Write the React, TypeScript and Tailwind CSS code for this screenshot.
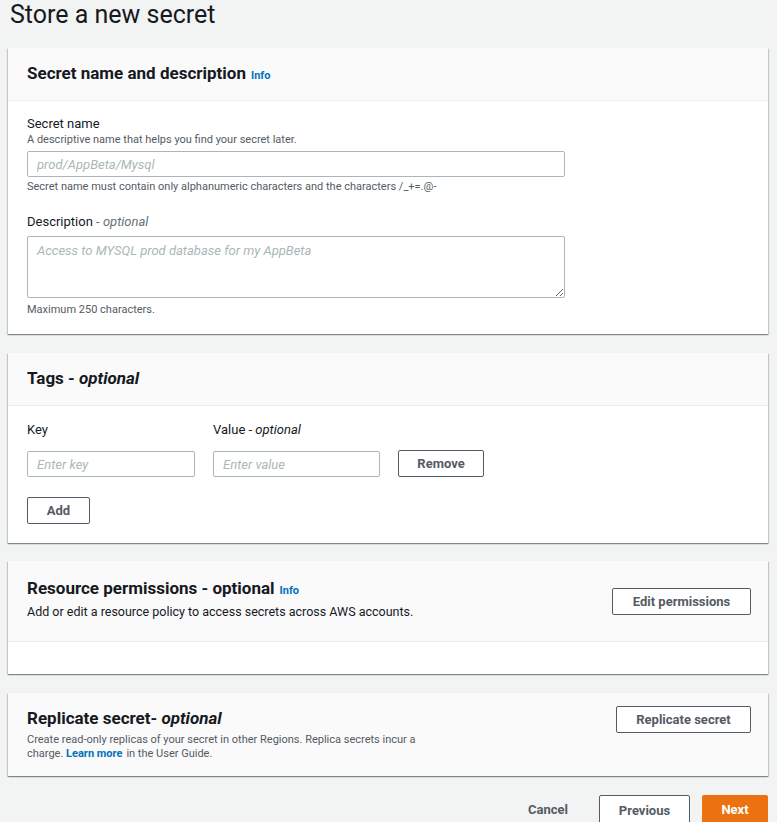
import React from 'react'

const FONT = { fontFamily: 'Roboto, "Noto Sans", Arial, sans-serif' }

const shadowCls =
  'shadow-[0_1px_1px_0_rgba(0,28,36,0.3),1px_1px_1px_0_rgba(0,28,36,0.15),-1px_1px_1px_0_rgba(0,28,36,0.15)]'

const btnCls =
  'h-[27px] rounded-[2px] border border-[#545b64] bg-white px-[16px] text-[13px] font-bold text-[#545b64] leading-none'

function Info() {
  return <span className="ml-[5px] text-[11px] font-bold text-[#0073bb]">Info</span>
}

export default function App() {
  return (
    <div className="min-h-screen bg-[#f2f3f3] pl-[8px] pr-[9px] text-[#16191f]" style={FONT}>
      <h1 className="mb-[18px] h-[30px] pl-[2px] text-[25px] leading-[30px] font-normal">Store a new secret</h1>

      {/* Secret name and description */}
      <section className={`${shadowCls} bg-white`}>
        <div className="flex h-[53px] items-center border-b border-[#eaeded] bg-[#fafafa] px-[19px]">
          <h2 className="text-[17px] font-bold">
            Secret name and description
            <Info />
          </h2>
        </div>
        <div className="px-[19px] pt-[15px] pb-[16px]">
          <div className="text-[13px] leading-[16px]">Secret name</div>
          <div className="text-[11px] leading-[15px] text-[#545b64]">A descriptive name that helps you find your secret later.</div>
          <input
            className="mt-[4px] block h-[26px] w-[538px] rounded-[2px] border border-[#aab7b8] px-[9px] text-[13px] placeholder:italic placeholder:text-[#aab7b8] outline-none"
            placeholder="prod/AppBeta/Mysql"
          />
          <div className="mt-[2px] text-[11px] leading-[16px] text-[#545b64]">
            Secret name must contain only alphanumeric characters and the characters /_+=.@-
          </div>

          <div className="mt-[19px] text-[13px] leading-[16px]">
            Description <span className="text-[#687078]">-</span>{' '}
            <span className="italic text-[#687078]">optional</span>
          </div>
          <textarea
            className="mt-[6px] block h-[62px] w-[538px] rounded-[2px] border border-[#aab7b8] px-[9px] py-[4px] text-[13px] placeholder:italic placeholder:text-[#aab7b8] outline-none"
            placeholder="Access to MYSQL prod database for my AppBeta"
          />
          <div className="mt-[4px] text-[11px] leading-[16px] text-[#545b64]">Maximum 250 characters.</div>
        </div>
      </section>

      {/* Tags */}
      <section className={`${shadowCls} mt-[19px] bg-white`}>
        <div className="flex h-[53px] items-center border-b border-[#eaeded] bg-[#fafafa] px-[19px]">
          <h2 className="text-[17px] font-bold">
            Tags - <span className="italic">optional</span>
          </h2>
        </div>
        <div className="px-[19px] pt-[16px] pb-[19px]">
          <div className="flex gap-[18px]">
            <div className="w-[168px]">
              <div className="text-[13px] leading-[16px]">Key</div>
              <input
                className="mt-[13px] block h-[26px] w-[168px] rounded-[2px] border border-[#aab7b8] px-[9px] text-[13px] placeholder:italic placeholder:text-[#aab7b8] outline-none"
                placeholder="Enter key"
              />
            </div>
            <div className="w-[167px]">
              <div className="text-[13px] leading-[16px]">
                Value - <span className="italic">optional</span>
              </div>
              <input
                className="mt-[13px] block h-[26px] w-[167px] rounded-[2px] border border-[#aab7b8] px-[9px] text-[13px] placeholder:italic placeholder:text-[#aab7b8] outline-none"
                placeholder="Enter value"
              />
            </div>
            <div className="flex items-end">
              <button className={`${btnCls} w-[86px]`}>Remove</button>
            </div>
          </div>
          <button className={`${btnCls} mt-[20px] w-[63px]`}>Add</button>
        </div>
      </section>

      {/* Resource permissions */}
      <section className={`${shadowCls} mt-[18px] bg-white`}>
        <div className="flex h-[81px] items-center justify-between border-b border-[#eaeded] bg-[#fafafa] pl-[19px] pr-[17px]">
          <div className="-mt-[3px]">
            <h2 className="text-[17px] leading-[22px] font-bold">
              Resource permissions - optional
              <Info />
            </h2>
            <p className="text-[12.5px] leading-[20px]">Add or edit a resource policy to access secrets across AWS accounts.</p>
          </div>
          <button className={`${btnCls} w-[139px]`}>Edit permissions</button>
        </div>
        <div className="h-[32px]" />
      </section>

      {/* Replicate secret */}
      <section className={`${shadowCls} mt-[19px] bg-[#fafafa]`}>
        <div className="flex items-start justify-between pt-[13px] pb-[15px] pl-[19px] pr-[17px]">
          <div className="w-[400px] pt-[1px]">
            <h2 className="text-[17px] leading-[22px] font-bold">
              Replicate secret- <span className="italic">optional</span>
            </h2>
            <p className="mt-[4px] text-[11px] leading-[14px] text-[#545b64]">
              Create read-only replicas of your secret in other Regions. Replica secrets incur a
              <br />
              <span>charge. </span>
              <span className="mr-[4px] font-bold text-[#0073bb]">Learn more</span>
              <span>in the User Guide.</span>
            </p>
          </div>
          <button className={`${btnCls} w-[135px]`}>Replicate secret</button>
        </div>
      </section>

      {/* Footer */}
      <div className="mt-[19px] flex items-center justify-end gap-[12px] pb-[20px]">
        <button className="mr-[19px] text-[13px] font-bold text-[#545b64]">Cancel</button>
        <button className={`${btnCls} h-[30px] w-[91px]`}>Previous</button>
        <button className="h-[30px] w-[66px] rounded-[2px] bg-[#ec7211] text-[13px] font-bold text-white">Next</button>
      </div>
    </div>
  )
}
